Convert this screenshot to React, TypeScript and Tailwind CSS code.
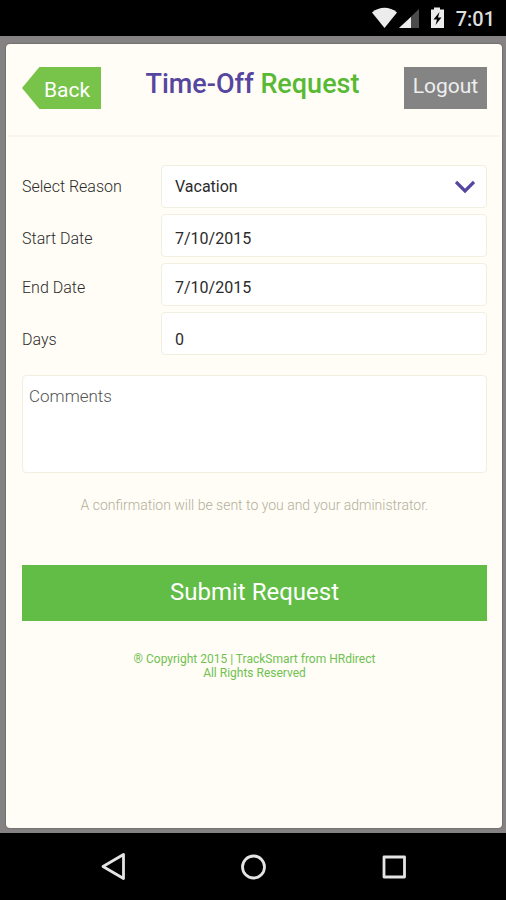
import React from "react";

interface FieldRowProps {
  label: string;
  value: string;
  labelClass: string;
  valueClass: string;
  icon?: React.ReactNode;
}

const FieldRow: React.FC<FieldRowProps> = ({
  label,
  value,
  labelClass,
  valueClass,
  icon,
}) => {
  return (
    <div className="flex h-[43px] items-stretch text-[16px] text-[#2b2b2b]">
      <div className={`flex w-[139px] items-center font-light ${labelClass}`}>
        <span className="whitespace-nowrap">{label}</span>
      </div>
      <div
        className={`flex flex-1 items-center justify-between rounded-[4px] border border-[#f1efdf] bg-white pl-[13px] pr-[11px] ${valueClass}`}
      >
        <span className="whitespace-nowrap">{value}</span>
        {icon}
      </div>
    </div>
  );
};

const StatusBar = () => (
  <div className="flex h-[36px] justify-end bg-black pr-[11px]">
    <svg width="82" height="36" viewBox="0 0 82 36">
      <path d="M1 12.5C8.500 6.300 18.500 6.300 26 12.500L13.500 28Z" fill="#ececec" />
      <path d="M48 9V28H28Z" fill="#4b4b4b" />
      <path d="M40 17V28H28Z" fill="#ececec" />
      <path d="M60 9.500h3v-2h6v2h4v18.500h-13z" fill="#ececec" />
      <path d="M68.500 12L62.500 19.500H66L64.500 25L70.500 17.500H67Z" fill="#000" />
    </svg>
    <span className="ml-[3px] text-[20px] leading-[38px] font-medium text-[#dedede]">
      7:01
    </span>
  </div>
);

const NavBar = () => (
  <div className="h-[67px] bg-black">
    <svg
      width="506"
      height="67"
      viewBox="0 0 506 67"
      fill="none"
      stroke="#e4e4e4"
      strokeWidth="2.8"
      strokeLinejoin="round"
    >
      <path d="M103 33.500L123.500 21.500V45.500Z" />
      <circle cx="253.500" cy="34" r="11" />
      <rect x="384" y="24" width="20.500" height="20" />
    </svg>
  </div>
);

const App: React.FC = () => {
  return (
    <div className="flex h-[900px] w-[506px] flex-col overflow-hidden bg-[#848283] font-['Roboto',sans-serif]">
      <StatusBar />
      <div className="flex-1 pt-[8px] pr-[4px] pb-[5px] pl-[6px]">
        <div className="h-full rounded-[4px] bg-[#fffdf5] shadow-[0_0_2px_#4c4c45]">
          <header className="mx-[2px] flex h-[93px] items-start justify-between border-b-2 border-[#f8f5ea] pr-[13px] pl-[14px] text-white">
            <button className="mt-[23px] h-[42px] w-[79px] bg-[#78c44a] pt-[3px] pl-[22px] text-left text-[21px] leading-[40px] [clip-path:polygon(22%_0,100%_0,100%_100%,22%_100%,0_50%)]">
              Back
            </button>
            <h1 className="mt-[20px] text-[27px] leading-[40px] font-medium whitespace-nowrap text-[#5646a0]">
              Time-Off <span className="text-[#58b934]">Request</span>
            </h1>
            <button className="mt-[23px] h-[42px] w-[83px] bg-[#848484] pb-[3px] text-[21px] leading-[39px] text-[#eee]">
              Logout
            </button>
          </header>

          <div className="pt-[28px] pr-[15px] pl-[16px]">
            <div className="flex flex-col gap-[6px]">
              <FieldRow
                label="Select Reason"
                value="Vacation"
                labelClass=""
                valueClass=""
                icon={
                  <svg width="20" height="14" viewBox="0 0 20 14" fill="none">
                    <path d="M1 2L10 11L19 2" stroke="#5646a0" strokeWidth="3.200" />
                  </svg>
                }
              />
              <FieldRow
                label="Start Date"
                value="7/10/2015"
                labelClass="pt-[7px]"
                valueClass="pt-[6px]"
              />
              <FieldRow
                label="End Date"
                value="7/10/2015"
                labelClass="pt-[7px]"
                valueClass="pt-[7px]"
              />
              <FieldRow
                label="Days"
                value="0"
                labelClass="pt-[13px]"
                valueClass="pt-[13px]"
              />
            </div>

            <div className="mt-[20px] h-[98px] rounded-[4px] border border-[#f1efdf] bg-white pt-[8px] pl-[6px] text-[17px] leading-[24px] font-light text-[#555]">
              Comments
            </div>
            <p className="mt-[22px] text-center text-[14px] leading-[20px] font-light whitespace-nowrap text-[#b3af9d]">
              A confirmation will be sent to you and your administrator.
            </p>
            <button className="mt-[50px] h-[56px] w-full bg-[#62bd46] pb-[3px] text-[24px] text-white">
              Submit Request
            </button>
            <p className="mt-[31px] text-center text-[12px] leading-[14px] whitespace-nowrap text-[#6fc153]">
              ® Copyright 2015 | TrackSmart from HRdirect
              <br />
              All Rights Reserved
            </p>
          </div>
        </div>
      </div>
      <NavBar />
    </div>
  );
};

export default App;
